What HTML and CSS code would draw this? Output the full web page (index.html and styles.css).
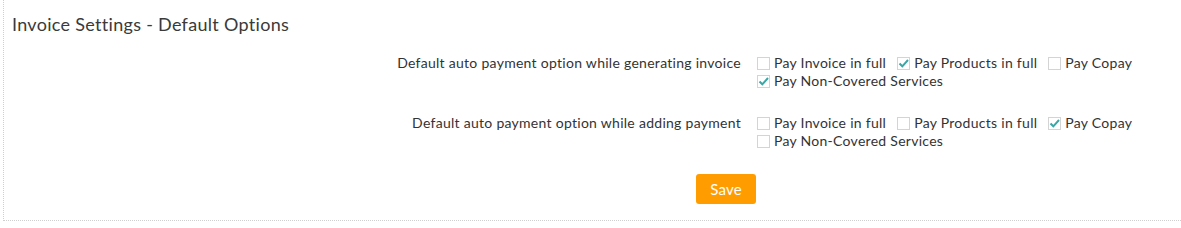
FILE: index.html
```html
<!DOCTYPE html>
<html>
<head>
<meta charset="utf-8">
<link rel="stylesheet" href="styles.css">
</head>
<body>
<div class="panel">
  <h2 class="title">Invoice Settings - Default Options</h2>
  <div class="form">
    <div class="row">
      <div class="label">Default auto payment option while generating invoice</div>
      <div class="options">
        <label class="opt"><span class="cb"></span>Pay Invoice in full</label>
        <label class="opt"><span class="cb checked"><svg viewBox="0 0 13 13"><path d="M2.5 6.5 L5.3 9.3 L11 3" /></svg></span>Pay Products in full</label>
        <label class="opt"><span class="cb"></span>Pay Copay</label>
        <label class="opt"><span class="cb checked"><svg viewBox="0 0 13 13"><path d="M2.5 6.5 L5.3 9.3 L11 3" /></svg></span>Pay Non-Covered Services</label>
      </div>
    </div>
    <div class="row">
      <div class="label">Default auto payment option while adding payment</div>
      <div class="options">
        <label class="opt"><span class="cb"></span>Pay Invoice in full</label>
        <label class="opt"><span class="cb"></span>Pay Products in full</label>
        <label class="opt"><span class="cb checked"><svg viewBox="0 0 13 13"><path d="M2.5 6.5 L5.3 9.3 L11 3" /></svg></span>Pay Copay</label>
        <label class="opt"><span class="cb"></span>Pay Non-Covered Services</label>
      </div>
    </div>
    <div class="actions">
      <button class="save">Save</button>
    </div>
  </div>
</div>
</body>
</html>
```
FILE: styles.css
```css
html, body {
  margin: 0;
  padding: 0;
  background: #fff;
}
body {
  font-family: Lato, "Open Sans", sans-serif;
  color: #333;
  padding-left: 3px;
}
.panel {
  border-left: 1px dotted #cfcfcf;
  border-bottom: 1px dotted #cfcfcf;
  padding: 13px 0 11px 8px;
  height: 196px;
}
.title {
  margin: 0;
  font-size: 18px;
  letter-spacing: 0.3px;
  font-weight: normal;
  color: #3a3a3a;
  line-height: 22px;
}
.form {
  margin-top: 19px;
}
.row {
  display: grid;
  grid-template-columns: 729px 392px;
  column-gap: 16px;
  margin-bottom: 24px;
}
.label {
  text-align: right;
  font-size: 14px;
  letter-spacing: 0.28px;
  line-height: 18px;
  color: #333;
}
.options {
  display: flex;
  flex-wrap: wrap;
  font-size: 14px;
  letter-spacing: 0.28px;
  line-height: 18px;
}
.opt {
  display: inline-flex;
  align-items: center;
  margin-right: 11px;
  color: #333;
}
.cb {
  width: 13px;
  height: 13px;
  box-sizing: border-box;
  border: 1px solid #d4d4d4;
  margin-right: 4px;
  background: #fff;
  display: inline-block;
  position: relative;
  flex: none;
}
.cb svg {
  position: absolute;
  left: -1px;
  top: -1px;
  width: 13px;
  height: 13px;
}
.cb svg path {
  fill: none;
  stroke: #3aa6a6;
  stroke-width: 2;
}
.actions {
  display: flex;
  justify-content: center;
  margin-top: 8px;
  padding-left: 279px;
  width: 870px;
}
.save {
  background: #ff9d00;
  border: none;
  border-radius: 3px;
  color: #fff;
  font-family: Lato, sans-serif;
  font-size: 15px;
  letter-spacing: 0.2px;
  width: 60px;
  height: 30px;
  padding: 0;
}
```
